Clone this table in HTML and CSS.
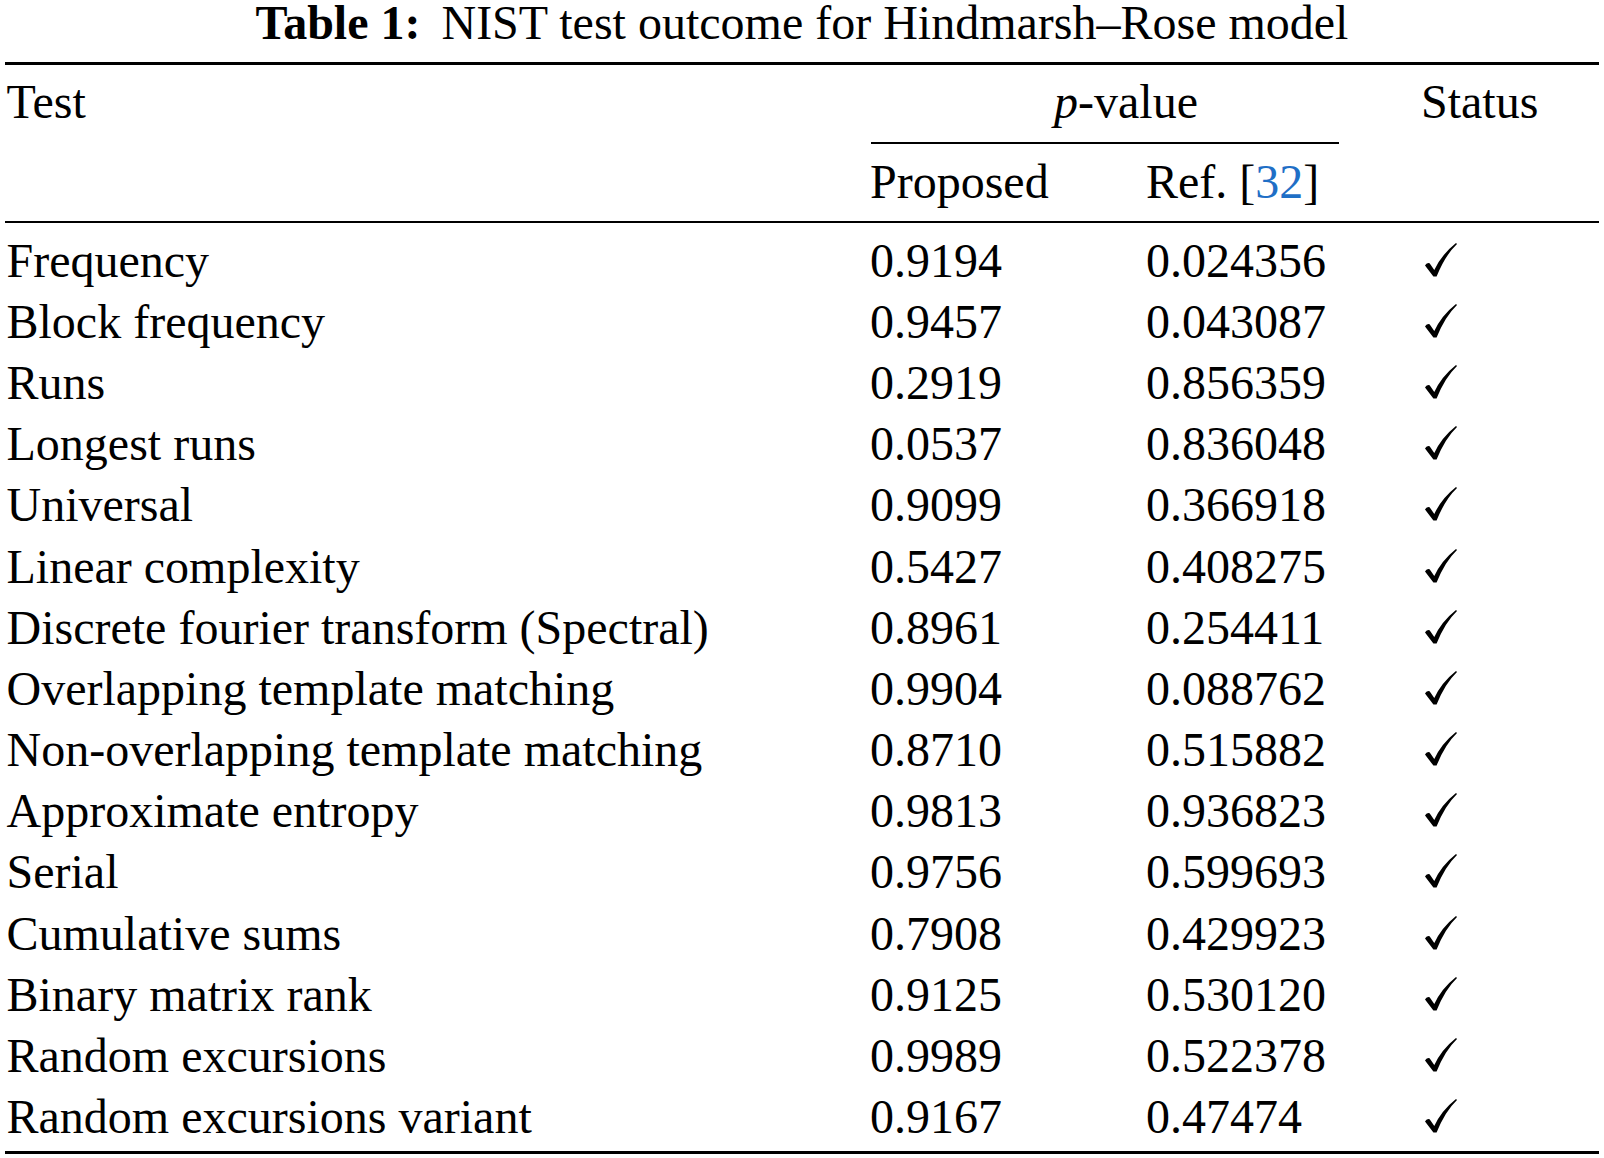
FILE: index.html
```html
<!DOCTYPE html>
<html lang="en">
<head>
<meta charset="utf-8">
<title>Table 1: NIST test outcome for Hindmarsh–Rose model</title>
<link rel="stylesheet" href="styles.css">
</head>
<body>
<div class="page">
  <div class="caption"><b class="cap-label">Table 1:</b> NIST test outcome for Hindmarsh–Rose model</div>
  <div class="table">
    <div class="rule rule-top"></div>
    <div class="head cols">
      <div class="cell first">Test</div>
      <div class="cell pvalue"><i>p</i>-value</div>
      <div class="cell status">Status</div>
      <div class="cmid"></div>
      <div class="cell sub-prop">Proposed</div>
      <div class="cell sub-ref">Ref. [<span class="cite">32</span>]</div>
    </div>
    <div class="rule rule-mid"></div>
    <div class="body">
      <div class="row cols"><div class="cell first">Frequency</div><div class="cell">0.9194</div><div class="cell">0.024356</div><div class="cell"><svg class="check" viewBox="0 0 32 34"><path d="M0,22.5 Q1.5,19.3 4.6,20.2 L9.3,27 Q16.5,11.5 31,0 L32,1 Q20,12.5 11.6,33.6 L8.4,33.6 Z"/></svg></div></div>
      <div class="row cols"><div class="cell first">Block frequency</div><div class="cell">0.9457</div><div class="cell">0.043087</div><div class="cell"><svg class="check" viewBox="0 0 32 34"><path d="M0,22.5 Q1.5,19.3 4.6,20.2 L9.3,27 Q16.5,11.5 31,0 L32,1 Q20,12.5 11.6,33.6 L8.4,33.6 Z"/></svg></div></div>
      <div class="row cols"><div class="cell first">Runs</div><div class="cell">0.2919</div><div class="cell">0.856359</div><div class="cell"><svg class="check" viewBox="0 0 32 34"><path d="M0,22.5 Q1.5,19.3 4.6,20.2 L9.3,27 Q16.5,11.5 31,0 L32,1 Q20,12.5 11.6,33.6 L8.4,33.6 Z"/></svg></div></div>
      <div class="row cols"><div class="cell first">Longest runs</div><div class="cell">0.0537</div><div class="cell">0.836048</div><div class="cell"><svg class="check" viewBox="0 0 32 34"><path d="M0,22.5 Q1.5,19.3 4.6,20.2 L9.3,27 Q16.5,11.5 31,0 L32,1 Q20,12.5 11.6,33.6 L8.4,33.6 Z"/></svg></div></div>
      <div class="row cols"><div class="cell first">Universal</div><div class="cell">0.9099</div><div class="cell">0.366918</div><div class="cell"><svg class="check" viewBox="0 0 32 34"><path d="M0,22.5 Q1.5,19.3 4.6,20.2 L9.3,27 Q16.5,11.5 31,0 L32,1 Q20,12.5 11.6,33.6 L8.4,33.6 Z"/></svg></div></div>
      <div class="row cols"><div class="cell first">Linear complexity</div><div class="cell">0.5427</div><div class="cell">0.408275</div><div class="cell"><svg class="check" viewBox="0 0 32 34"><path d="M0,22.5 Q1.5,19.3 4.6,20.2 L9.3,27 Q16.5,11.5 31,0 L32,1 Q20,12.5 11.6,33.6 L8.4,33.6 Z"/></svg></div></div>
      <div class="row cols"><div class="cell first">Discrete fourier transform (Spectral)</div><div class="cell">0.8961</div><div class="cell">0.254411</div><div class="cell"><svg class="check" viewBox="0 0 32 34"><path d="M0,22.5 Q1.5,19.3 4.6,20.2 L9.3,27 Q16.5,11.5 31,0 L32,1 Q20,12.5 11.6,33.6 L8.4,33.6 Z"/></svg></div></div>
      <div class="row cols"><div class="cell first">Overlapping template matching</div><div class="cell">0.9904</div><div class="cell">0.088762</div><div class="cell"><svg class="check" viewBox="0 0 32 34"><path d="M0,22.5 Q1.5,19.3 4.6,20.2 L9.3,27 Q16.5,11.5 31,0 L32,1 Q20,12.5 11.6,33.6 L8.4,33.6 Z"/></svg></div></div>
      <div class="row cols"><div class="cell first">Non-overlapping template matching</div><div class="cell">0.8710</div><div class="cell">0.515882</div><div class="cell"><svg class="check" viewBox="0 0 32 34"><path d="M0,22.5 Q1.5,19.3 4.6,20.2 L9.3,27 Q16.5,11.5 31,0 L32,1 Q20,12.5 11.6,33.6 L8.4,33.6 Z"/></svg></div></div>
      <div class="row cols"><div class="cell first">Approximate entropy</div><div class="cell">0.9813</div><div class="cell">0.936823</div><div class="cell"><svg class="check" viewBox="0 0 32 34"><path d="M0,22.5 Q1.5,19.3 4.6,20.2 L9.3,27 Q16.5,11.5 31,0 L32,1 Q20,12.5 11.6,33.6 L8.4,33.6 Z"/></svg></div></div>
      <div class="row cols"><div class="cell first">Serial</div><div class="cell">0.9756</div><div class="cell">0.599693</div><div class="cell"><svg class="check" viewBox="0 0 32 34"><path d="M0,22.5 Q1.5,19.3 4.6,20.2 L9.3,27 Q16.5,11.5 31,0 L32,1 Q20,12.5 11.6,33.6 L8.4,33.6 Z"/></svg></div></div>
      <div class="row cols"><div class="cell first">Cumulative sums</div><div class="cell">0.7908</div><div class="cell">0.429923</div><div class="cell"><svg class="check" viewBox="0 0 32 34"><path d="M0,22.5 Q1.5,19.3 4.6,20.2 L9.3,27 Q16.5,11.5 31,0 L32,1 Q20,12.5 11.6,33.6 L8.4,33.6 Z"/></svg></div></div>
      <div class="row cols"><div class="cell first">Binary matrix rank</div><div class="cell">0.9125</div><div class="cell">0.530120</div><div class="cell"><svg class="check" viewBox="0 0 32 34"><path d="M0,22.5 Q1.5,19.3 4.6,20.2 L9.3,27 Q16.5,11.5 31,0 L32,1 Q20,12.5 11.6,33.6 L8.4,33.6 Z"/></svg></div></div>
      <div class="row cols"><div class="cell first">Random excursions</div><div class="cell">0.9989</div><div class="cell">0.522378</div><div class="cell"><svg class="check" viewBox="0 0 32 34"><path d="M0,22.5 Q1.5,19.3 4.6,20.2 L9.3,27 Q16.5,11.5 31,0 L32,1 Q20,12.5 11.6,33.6 L8.4,33.6 Z"/></svg></div></div>
      <div class="row cols"><div class="cell first">Random excursions variant</div><div class="cell">0.9167</div><div class="cell">0.47474</div><div class="cell"><svg class="check" viewBox="0 0 32 34"><path d="M0,22.5 Q1.5,19.3 4.6,20.2 L9.3,27 Q16.5,11.5 31,0 L32,1 Q20,12.5 11.6,33.6 L8.4,33.6 Z"/></svg></div></div>
    </div>
    <div class="rule rule-bottom"></div>
  </div>
</div>
</body>
</html>
```
FILE: styles.css
```css
html, body {
  margin: 0;
  padding: 0;
  background: #ffffff;
}

.page {
  font-family: "Liberation Serif", "Times New Roman", serif;
  font-size: 48px;
  color: #000000;
  width: 1604px;
}

.caption {
  text-align: center;
  line-height: 46px;
  height: 46px;
  margin-bottom: 16px;
  white-space: nowrap;
}

.cap-label {
  font-weight: bold;
  margin-right: 9px;
}

.table {
  margin-left: 5px;
  width: 1594px;
}

.rule {
  background: #000000;
}

.rule-top {
  height: 3px;
}

.rule-mid {
  height: 2px;
  margin-top: 9px;
}

.rule-bottom {
  height: 3px;
  margin-top: 4px;
}

.cols {
  display: grid;
  grid-template-columns: 865px 276px 275px 1fr;
}

.cell {
  line-height: 61.2px;
  height: 61.2px;
  white-space: nowrap;
}

.cell.first {
  padding-left: 1.5px;
}

.head {
  padding-top: 6px;
  grid-template-rows: 61.2px auto 61.2px;
}

.head .first {
  grid-column: 1;
  grid-row: 1;
}

.pvalue {
  grid-column: 2 / 4;
  grid-row: 1;
  text-align: center;
  padding-right: 39px;
}

.status {
  grid-column: 4;
  grid-row: 1;
}

.cmid {
  grid-column: 2 / 4;
  grid-row: 2;
  width: 468px;
  height: 2px;
  margin: 10px 0 6.6px 1px;
  background: #000000;
}

.sub-prop {
  grid-column: 2;
  grid-row: 3;
}

.sub-ref {
  grid-column: 3;
  grid-row: 3;
}

.cite {
  color: #1f6fc6;
}

.body {
  padding-top: 6.6px;
}

.check {
  width: 32px;
  height: 34px;
  margin-left: 4px;
  vertical-align: baseline;
  fill: #000000;
}
```
